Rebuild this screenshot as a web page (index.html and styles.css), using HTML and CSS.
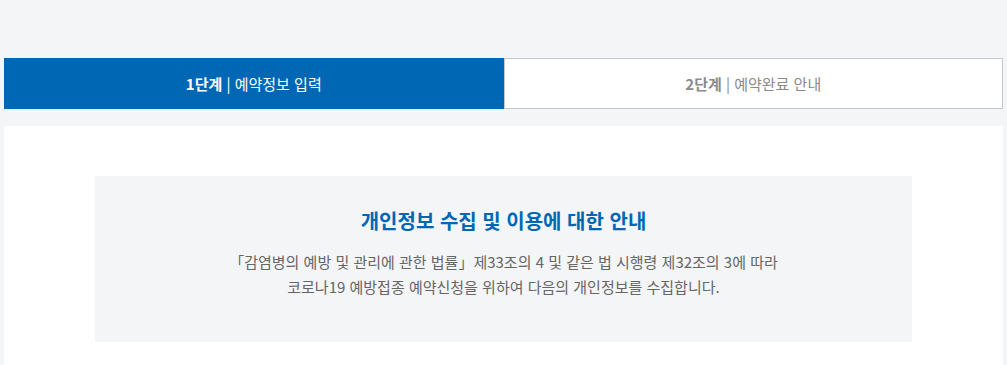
FILE: index.html
```html
<!DOCTYPE html>
<html lang="ko">
<head>
    <meta charset="utf-8">
    <title>예약정보 입력</title>
    <link rel="stylesheet" href="styles.css">
</head>
<body>
    <div class="wrap">
        <ul class="steps">
            <li class="step on"><strong>1단계</strong> | 예약정보 입력</li>
            <li class="step"><strong>2단계</strong> | 예약완료 안내</li>
        </ul>
        <div class="panel">
            <div class="notice">
                <h2 class="notice_tit">개인정보 수집 및 이용에 대한 안내</h2>
                <p class="notice_txt">「감염병의 예방 및 관리에 관한 법률」제33조의 4 및 같은 법 시행령 제32조의 3에 따라<br>코로나19 예방접종 예약신청을 위하여 다음의 개인정보를 수집합니다.</p>
            </div>
        </div>
    </div>
</body>
</html>
```

FILE: styles.css
```css
html, body {
    margin: 0;
    padding: 0;
    background: #f4f5f7;
    font-family: "Noto Sans CJK KR", "Noto Sans", sans-serif;
}

.wrap {
    padding: 58px 4px 0;
}

.steps {
    display: flex;
    margin: 0;
    padding: 0;
    list-style: none;
}

.step {
    flex: 1;
    height: 49px;
    line-height: 49px;
    text-align: center;
    font-size: 15px;
    color: #8a8a8a;
    background: #fff;
    border: 1px solid #c4c7cc;
}

.step strong {
    font-weight: bold;
}

.step.on {
    color: #fff;
    background: #0067b5;
    border-color: #0067b5;
}

.panel {
    margin-top: 17px;
    padding: 50px 0 40px;
    background: #fff;
}

.notice {
    margin: 0 91px;
    height: 166px;
    padding-top: 30px;
    box-sizing: border-box;
    text-align: center;
    background: #f4f5f7;
}

.notice_tit {
    margin: 0;
    font-size: 20px;
    line-height: 30px;
    color: #0067b5;
    font-weight: bold;
}

.notice_txt {
    margin: 13px 0 0;
    font-size: 15px;
    line-height: 25px;
    color: #666;
}
```
